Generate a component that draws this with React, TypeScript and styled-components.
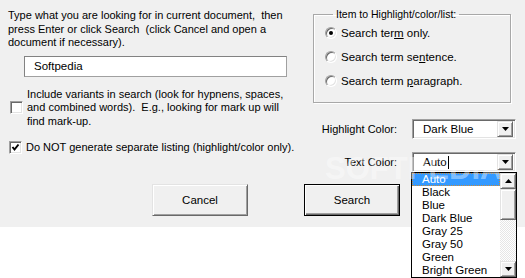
import React from "react";
import styled, { createGlobalStyle, css } from "styled-components";

const Global = createGlobalStyle`
  html, body { margin: 0; padding: 0; background: #ffffff; }
  body { font-family: "Liberation Sans", Arial, sans-serif; font-size: 11px; color: #000; }
  * { box-sizing: border-box; }
`;

const Page = styled.div`
  position: relative;
  width: 525px;
  height: 278px;
  background: #ffffff;
  overflow: hidden;
`;

const Dialog = styled.div`
  background: #f0f0f0;
  height: 227px;
  display: flex;
  flex-direction: column;
`;

const TopRow = styled.div`
  display: flex;
`;

const LeftCol = styled.div`
  width: 313px;
  padding: 9px 0 0 8px;
  display: flex;
  flex-direction: column;
`;

const Intro = styled.p`
  margin: 0;
  line-height: 13.5px;
  white-space: pre;
`;

const SearchInput = styled.div`
  margin: 6px 0 0 16px;
  width: 263px;
  height: 21px;
  background: #fff;
  border: 1px solid #a0a0a0;
  border-top-color: #828282;
  border-left-color: #828282;
  padding-left: 9px;
  display: flex;
  align-items: center;
  font-size: 11.5px;
`;

const CheckRow = styled.div<{ $top: number; $indent: number }>`
  display: flex;
  align-items: center;
  gap: 4px;
  margin-top: ${(p) => p.$top}px;
  padding-left: ${(p) => p.$indent}px;
`;

const CheckBox = styled.span`
  flex: none;
  width: 13px;
  height: 13px;
  background: #fff;
  border: 1px solid;
  border-color: #a0a0a0 #ffffff #ffffff #a0a0a0;
  box-shadow: inset 1px 1px 0 #696969, inset -1px -1px 0 #e3e3e3;
  display: flex;
  align-items: center;
  justify-content: center;
`;

const CheckLabel = styled.span`
  line-height: 13.5px;
  white-space: pre;
`;

const RightCol = styled.div`
  width: 205px;
  padding-top: 8px;
  display: flex;
  flex-direction: column;
`;

const Group = styled.fieldset`
  margin: 0;
  width: 198px;
  padding: 0 0 9px 11px;
  border: 1px solid #a8a8a8;
  box-shadow: 1px 1px 0 #ffffff, inset 1px 1px 0 #ffffff;
  display: flex;
  flex-direction: column;
`;

const Legend = styled.legend`
  margin-left: 8px;
  padding: 0 3px;
  line-height: 13px;
  font-size: 10.5px;
`;

const RadioRow = styled.div`
  height: 24px;
  display: flex;
  align-items: center;
  gap: 4px;
  font-size: 11.5px;
`;

const Radio = styled.span<{ $on?: boolean }>`
  flex: none;
  width: 12px;
  height: 12px;
  border-radius: 50%;
  background: #fff;
  border: 1px solid;
  border-color: #a0a0a0 #ffffff #ffffff #a0a0a0;
  box-shadow: inset 1px 1px 0 #696969, inset -1px -1px 0 #e3e3e3;
  display: flex;
  align-items: center;
  justify-content: center;
  &::after {
    content: "";
    width: 4px;
    height: 4px;
    border-radius: 50%;
    background: ${(p) => (p.$on ? "#000" : "transparent")};
  }
`;

const Mn = styled.span`
  text-decoration: underline;
  text-underline-offset: 1px;
`;

const ComboRow = styled.div<{ $top: number }>`
  display: flex;
  align-items: center;
  margin-top: ${(p) => p.$top}px;
  gap: 15px;
`;

const ComboLabel = styled.span`
  width: 84px;
  text-align: right;
`;

const Combo = styled.div`
  position: relative;
  flex: none;
  width: 104px;
  height: 20px;
  background: #fff;
  border: 1px solid;
  border-color: #a0a0a0 #ffffff #ffffff #a0a0a0;
  box-shadow: inset 1px 1px 0 #696969, inset -1px -1px 0 #e3e3e3;
  display: flex;
  align-items: center;
  padding: 2px 2px 2px 10px;
  font-size: 11.5px;
`;

const ComboText = styled.span`
  flex: 1;
  display: flex;
  align-items: center;
`;

const Caret = styled.span`
  display: inline-block;
  width: 1px;
  height: 13px;
  background: #000;
  margin-left: 1px;
`;

const raised = css`
  background: #f0f0f0;
  border: 1px solid;
  border-color: #e3e3e3 #696969 #696969 #e3e3e3;
  box-shadow: inset 1px 1px 0 #ffffff, inset -1px -1px 0 #a0a0a0;
`;

const ArrowBtn = styled.span`
  ${raised};
  width: 16px;
  height: 16px;
  display: flex;
  align-items: center;
  justify-content: center;
  flex: none;
`;

const ListBox = styled.div`
  position: absolute;
  left: -2px;
  top: calc(100% + 1px);
  width: 106px;
  height: 106px;
  background: #fff;
  border: 1px solid #000;
  display: flex;
  z-index: 2;
`;

const Items = styled.div`
  flex: 1;
  display: flex;
  flex-direction: column;
`;

const Item = styled.div<{ $sel?: boolean }>`
  height: 13px;
  line-height: 13px;
  padding-left: 10px;
  font-size: 11.5px;
  white-space: nowrap;
  ${(p) =>
    p.$sel &&
    css`
      background: #3399ff;
      color: #fff;
      outline: 1px dotted #c98a3a;
      outline-offset: -1px;
    `}
`;

const ScrollBar = styled.div`
  width: 16px;
  display: flex;
  flex-direction: column;
`;

const ScrollBtn = styled.span`
  ${raised};
  height: 16px;
  display: flex;
  align-items: center;
  justify-content: center;
`;

const Thumb = styled.span`
  ${raised};
  height: 31px;
`;

const Track = styled.span`
  flex: 1;
  background-color: #f4f4f4;
  background-image: repeating-conic-gradient(#ffffff 0 25%, #e6e6e6 0 50%);
  background-size: 2px 2px;
`;

const ButtonRow = styled.div`
  display: flex;
  gap: 56px;
  padding-left: 152px;
  margin-top: 12px;
`;

const Button = styled.button<{ $default?: boolean }>`
  ${raised};
  width: 96px;
  height: 32px;
  font-family: inherit;
  font-size: 11.5px;
  color: #000;
  padding: 0;
  ${(p) =>
    p.$default &&
    css`
      border: 1px solid #000;
      box-shadow: inset 1px 1px 0 #ffffff, inset -1px -1px 0 #696969,
        inset -2px -2px 0 #a0a0a0;
    `}
`;

const Watermark = styled.div`
  position: absolute;
  left: 325px;
  top: 153px;
  font-family: "Liberation Sans", Arial, sans-serif;
  font-weight: bold;
  font-size: 31px;
  line-height: 31px;
  color: rgba(255, 255, 255, 0.4);
  pointer-events: none;
  z-index: 3;
`;

const Arrow = ({ up }: { up?: boolean }) => (
  <svg width="7" height="4" viewBox="0 0 7 4">
    <polygon points={up ? "0,4 7,4 3.5,0" : "0,0 7,0 3.5,4"} fill="#000" />
  </svg>
);

const Check = () => (
  <svg width="9" height="9" viewBox="0 0 9 9">
    <polyline points="1.5,4 3.5,6.5 7.5,1.5" fill="none" stroke="#000" strokeWidth="2" />
  </svg>
);

const colors = ["Auto", "Black", "Blue", "Dark Blue", "Gray 25", "Gray 50", "Green", "Bright Green"];

export default function App() {
  return (
    <>
      <Global />
      <Page>
        <Dialog>
          <TopRow>
            <LeftCol>
              <Intro>
                {"Type what you are looking for in current document,  then\npress Enter or click Search  (click Cancel and open a\ndocument if necessary)."}
              </Intro>
              <SearchInput>Softpedia</SearchInput>
              <CheckRow $top={11} $indent={2}>
                <CheckBox />
                <CheckLabel>
                  {"Include variants in search (look for hypnens, spaces,\nand combined words).  E.g., looking for mark up will\nfind mark-up."}
                </CheckLabel>
              </CheckRow>
              <CheckRow $top={13} $indent={1}>
                <CheckBox>
                  <Check />
                </CheckBox>
                <CheckLabel>Do NOT generate separate listing (highlight/color only).</CheckLabel>
              </CheckRow>
            </LeftCol>
            <RightCol>
              <Group>
                <Legend>Item to Highlight/color/list:</Legend>
                <RadioRow>
                  <Radio $on />
                  <span>
                    Search ter<Mn>m</Mn> only.
                  </span>
                </RadioRow>
                <RadioRow>
                  <Radio />
                  <span>
                    Search term se<Mn>n</Mn>tence.
                  </span>
                </RadioRow>
                <RadioRow>
                  <Radio />
                  <span>
                    Search term <Mn>p</Mn>aragraph.
                  </span>
                </RadioRow>
              </Group>
              <ComboRow $top={16}>
                <ComboLabel>Highlight Color:</ComboLabel>
                <Combo>
                  <ComboText>Dark Blue</ComboText>
                  <ArrowBtn>
                    <Arrow />
                  </ArrowBtn>
                </Combo>
              </ComboRow>
              <ComboRow $top={13}>
                <ComboLabel>Text Color:</ComboLabel>
                <Combo>
                  <ComboText>
                    Auto
                    <Caret />
                  </ComboText>
                  <ArrowBtn>
                    <Arrow />
                  </ArrowBtn>
                  <ListBox>
                    <Items>
                      {colors.map((c, i) => (
                        <Item key={c} $sel={i === 0}>
                          {c}
                        </Item>
                      ))}
                    </Items>
                    <ScrollBar>
                      <ScrollBtn>
                        <Arrow up />
                      </ScrollBtn>
                      <Thumb />
                      <Track />
                      <ScrollBtn>
                        <Arrow />
                      </ScrollBtn>
                    </ScrollBar>
                  </ListBox>
                </Combo>
              </ComboRow>
            </RightCol>
          </TopRow>
          <ButtonRow>
            <Button>Cancel</Button>
            <Button $default>Search</Button>
          </ButtonRow>
        </Dialog>
        <Watermark>SOFTPEDIA</Watermark>
      </Page>
    </>
  );
}
